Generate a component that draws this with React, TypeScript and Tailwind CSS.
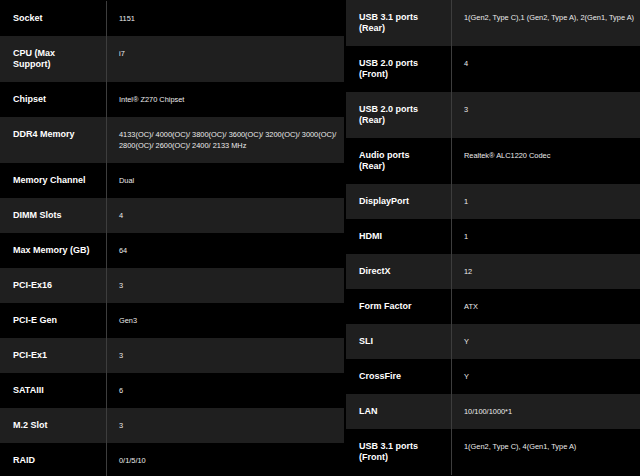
type Spec = { label: string[]; value: string[] };

const left: Spec[] = [
  { label: ["Socket"], value: ["1151"] },
  { label: ["CPU (Max", "Support)"], value: ["i7"] },
  { label: ["Chipset"], value: ["Intel® Z270 Chipset"] },
  {
    label: ["DDR4 Memory"],
    value: [
      "4133(OC)/ 4000(OC)/ 3800(OC)/ 3600(OC)/ 3200(OC)/ 3000(OC)/",
      "2800(OC)/ 2600(OC)/ 2400/ 2133 MHz",
    ],
  },
  { label: ["Memory Channel"], value: ["Dual"] },
  { label: ["DIMM Slots"], value: ["4"] },
  { label: ["Max Memory (GB)"], value: ["64"] },
  { label: ["PCI-Ex16"], value: ["3"] },
  { label: ["PCI-E Gen"], value: ["Gen3"] },
  { label: ["PCI-Ex1"], value: ["3"] },
  { label: ["SATAIII"], value: ["6"] },
  { label: ["M.2 Slot"], value: ["3"] },
  { label: ["RAID"], value: ["0/1/5/10"] },
];

const right: Spec[] = [
  { label: ["USB 3.1 ports", "(Rear)"], value: ["1(Gen2, Type C),1 (Gen2, Type A), 2(Gen1, Type A)"] },
  { label: ["USB 2.0 ports", "(Front)"], value: ["4"] },
  { label: ["USB 2.0 ports", "(Rear)"], value: ["3"] },
  { label: ["Audio ports", "(Rear)"], value: ["Realtek® ALC1220 Codec"] },
  { label: ["DisplayPort"], value: ["1"] },
  { label: ["HDMI"], value: ["1"] },
  { label: ["DirectX"], value: ["12"] },
  { label: ["Form Factor"], value: ["ATX"] },
  { label: ["SLI"], value: ["Y"] },
  { label: ["CrossFire"], value: ["Y"] },
  { label: ["LAN"], value: ["10/100/1000*1"] },
  { label: ["USB 3.1 ports", "(Front)"], value: ["1(Gen2, Type C), 4(Gen1, Type A)"] },
];

// ─── Spec table ────────────────────────────────────────────────────────────────
function SpecTable({ rows, greyFirst, labelWidth }: { rows: Spec[]; greyFirst: boolean; labelWidth: string }) {
  return (
    <div className="flex flex-col">
      {rows.map((row, i) => {
        const grey = greyFirst ? i % 2 === 0 : i % 2 === 1;
        return (
          <div key={i} className={`flex ${grey ? "bg-[#1f1f1f]" : "bg-black"}`}>
            <div className={`${labelWidth} shrink-0 border-r border-[#3d3d3d] pl-[13px] py-[12px]`}>
              {row.label.map((l, j) => (
                <div key={j} className="text-[9px] leading-[11px] font-bold text-white whitespace-nowrap">
                  {l}
                </div>
              ))}
            </div>
            <div className="flex-1 pl-[12px] py-[12px]">
              {row.value.map((v, j) => (
                <div key={j} className="text-[7.4px] leading-[11px] text-[#ececec] whitespace-nowrap">
                  {v}
                </div>
              ))}
            </div>
          </div>
        );
      })}
    </div>
  );
}

export default function App() {
  return (
    <div
      className="w-[640px] h-[476px] overflow-hidden bg-black flex"
      style={{ fontFamily: '"Liberation Sans", Arial, sans-serif' }}
    >
      <div className="w-[344px] shrink-0 overflow-hidden pt-[1px]">
        <SpecTable rows={left} greyFirst={false} labelWidth="w-[107px]" />
      </div>
      <div className="flex-1 ml-[2px] overflow-hidden">
        <SpecTable rows={right} greyFirst={true} labelWidth="w-[106px]" />
      </div>
    </div>
  );
}
